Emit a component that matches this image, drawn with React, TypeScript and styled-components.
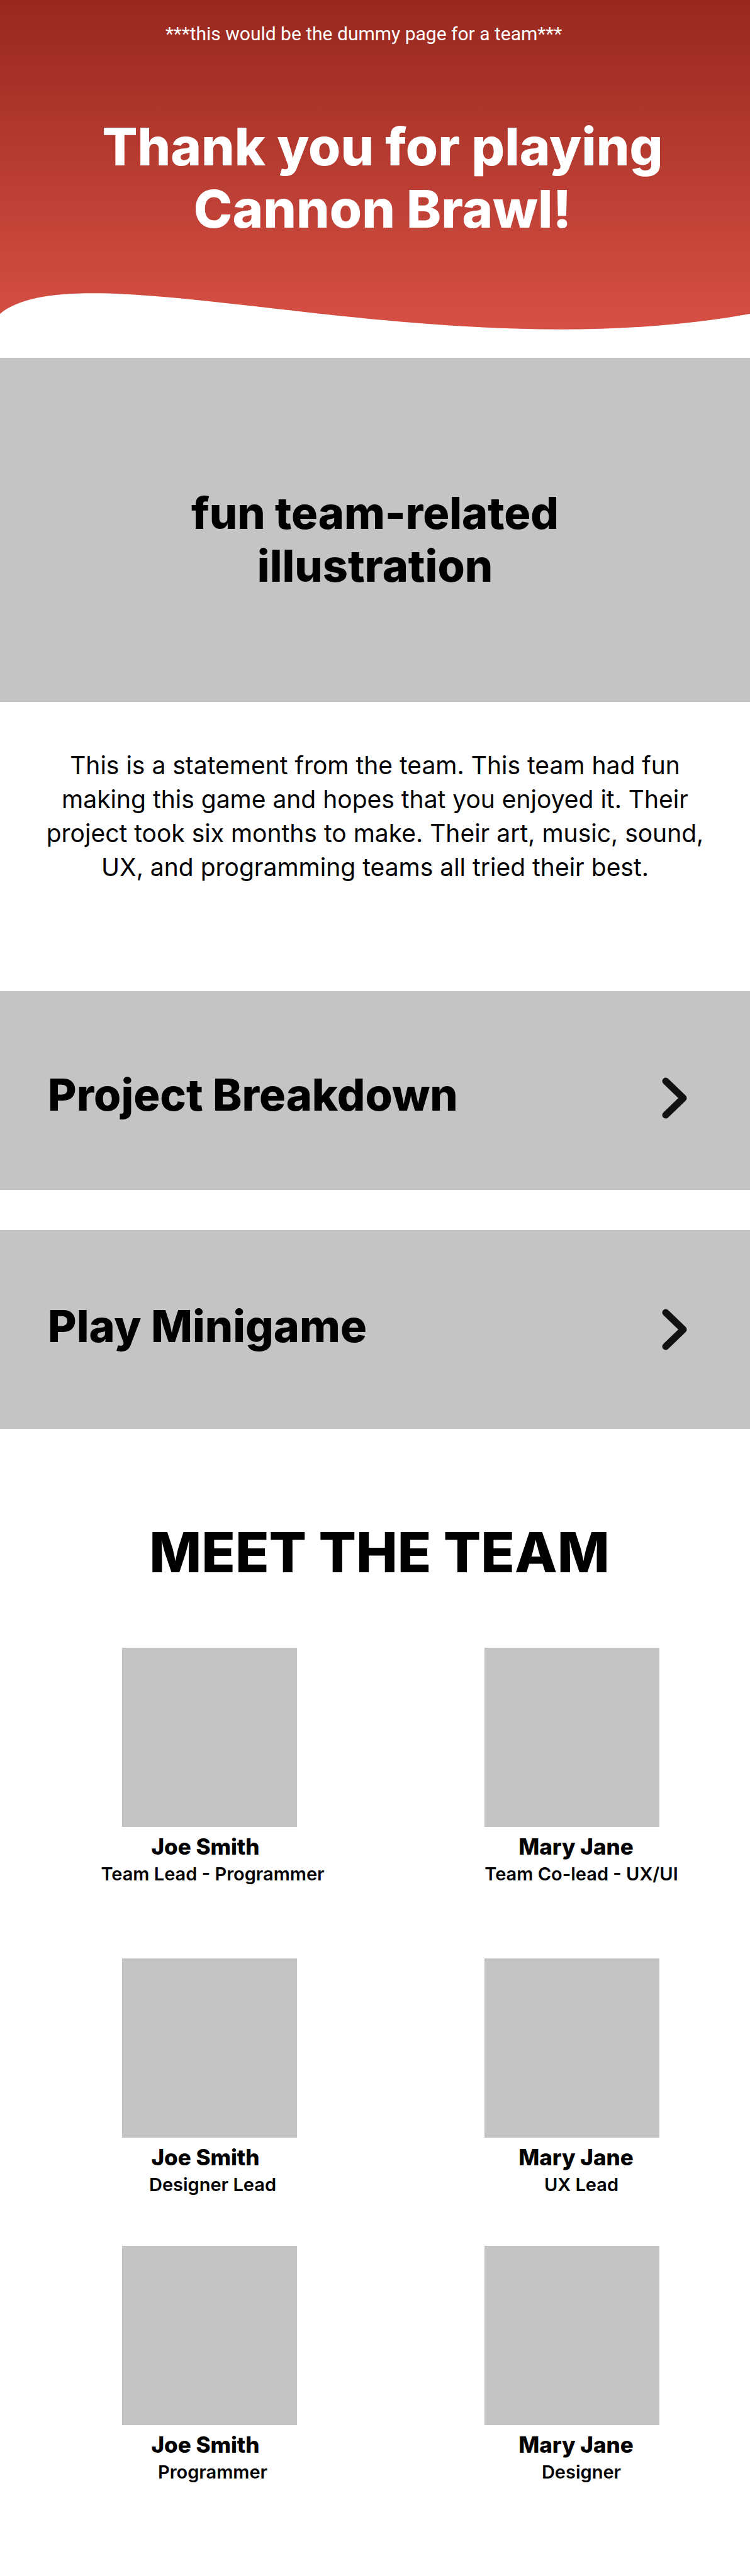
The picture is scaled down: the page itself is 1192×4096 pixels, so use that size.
import React from 'react';
import styled, { createGlobalStyle } from 'styled-components';

const GlobalStyle = createGlobalStyle`
  *, *::before, *::after { box-sizing: border-box; }
  body { margin: 0; background: #fff; }
  h1, h2, h3, p { margin: 0; }
`;

const Page = styled.div`
  color: #000;
  font-family: Inter, "Liberation Sans", sans-serif;
`;

const Hero = styled.header`
  display: flex;
  flex-direction: column;
  color: #fff;
  text-align: center;
  background: linear-gradient(#98281f 0, #d85045 532px);
`;

const Notice = styled.p`
  padding: 36px 36px 0 0;
  font-family: Roboto, "Liberation Sans", sans-serif;
  font-size: 30px;
  line-height: 36px;
  font-weight: 400;
`;

const HeroTitle = styled.h1`
  max-width: 986px;
  margin: 112px auto 78px;
  padding-left: 24px;
  font-size: 83px;
  line-height: 99px;
  font-weight: 800;
`;

const Wave = styled.svg`
  display: block;
  width: 100%;
  height: 109px;
  fill: #fff;
`;

const Illustration = styled.section`
  display: grid;
  place-items: center;
  height: 547px;
  padding-top: 31px;
  background: #c4c4c4;
`;

const IllustrationLabel = styled.h2`
  max-width: 640px;
  font-size: 70px;
  line-height: 84px;
  font-weight: 800;
  text-align: center;
`;

const Statement = styled.p`
  max-width: 1080px;
  margin: 0 auto;
  padding: 74px 0 170px;
  font-size: 39px;
  line-height: 54px;
  text-align: center;
`;

const Links = styled.nav`
  display: flex;
  flex-direction: column;
  gap: 64px;
`;

const LinkRow = styled.a<{ $drop: number }>`
  display: flex;
  align-items: center;
  justify-content: space-between;
  height: 316px;
  padding: ${({ $drop }) => $drop}px 100px 0 76px;
  color: inherit;
  text-decoration: none;
  background: #c4c4c4;
`;

const LinkLabel = styled.span`
  padding-bottom: 10px;
  font-size: 70px;
  line-height: 84px;
  font-weight: 800;
`;

const Chevron = styled.svg`
  width: 40px;
  height: 66px;
  fill: none;
  stroke: #111;
  stroke-width: 11;
  stroke-linecap: round;
  stroke-linejoin: round;
`;

const Team = styled.section`
  padding: 142px 0 148px;
`;

const TeamTitle = styled.h2`
  padding-left: 14px;
  font-size: 88px;
  line-height: 108px;
  font-weight: 800;
  text-align: center;
`;

const Members = styled.div`
  display: flex;
  flex-direction: column;
  padding: 98px 73px 0 123px;
`;

const MemberRow = styled.div<{ $gapAfter: number }>`
  display: flex;
  justify-content: space-between;
  margin-bottom: ${({ $gapAfter }) => $gapAfter}px;
`;

const Member = styled.article`
  width: 420px;
  text-align: center;
`;

const Photo = styled.div`
  width: 278px;
  height: 285px;
  margin: 0 auto 10px;
  background: #c4c4c4;
`;

const Name = styled.h3`
  padding-right: 13px;
  font-size: 35px;
  line-height: 42px;
  font-weight: 800;

  ${Member}:last-child & {
    padding: 0 0 0 13px;
  }
`;

const Role = styled.p`
  margin-top: 5px;
  padding-left: 10px;
  font-size: 29px;
  line-height: 36px;
  font-weight: 600;

  ${Member}:last-child & {
    padding-left: 30px;
  }
`;

const links = [
  { label: 'Project Breakdown', drop: 24 },
  { label: 'Play Minigame', drop: 0 },
];

const rows = [
  {
    gapAfter: 116,
    people: [
      { name: 'Joe Smith', role: 'Team Lead - Programmer' },
      { name: 'Mary Jane', role: 'Team Co-lead - UX/UI' },
    ],
  },
  {
    gapAfter: 79,
    people: [
      { name: 'Joe Smith', role: 'Designer Lead' },
      { name: 'Mary Jane', role: 'UX Lead' },
    ],
  },
  {
    gapAfter: 0,
    people: [
      { name: 'Joe Smith', role: 'Programmer' },
      { name: 'Mary Jane', role: 'Designer' },
    ],
  },
];

export default function App() {
  return (
    <Page>
      <GlobalStyle />
      <Hero>
        <Notice>***this would be the dummy page for a team***</Notice>
        <HeroTitle>Thank you for playing Cannon Brawl!</HeroTitle>
        <Wave viewBox="0 0 1192 109" preserveAspectRatio="none" aria-hidden="true">
          <path d="M0 39C130 -68 691 130 1192 39V109H0Z" />
        </Wave>
      </Hero>
      <Illustration>
        <IllustrationLabel>fun team-related illustration</IllustrationLabel>
      </Illustration>
      <Statement>
        This is a statement from the team. This team had fun making this game and hopes that you
        enjoyed it. Their project took six months to make. Their art, music, sound, UX, and
        programming teams all tried their best.
      </Statement>
      <Links>
        {links.map(({ label, drop }) => (
          <LinkRow key={label} href="#" $drop={drop}>
            <LinkLabel>{label}</LinkLabel>
            <Chevron viewBox="0 0 40 66" aria-hidden="true">
              <path d="M6 6L34 33L6 60" />
            </Chevron>
          </LinkRow>
        ))}
      </Links>
      <Team>
        <TeamTitle>MEET THE TEAM</TeamTitle>
        <Members>
          {rows.map(({ gapAfter, people }, i) => (
            <MemberRow key={i} $gapAfter={gapAfter}>
              {people.map(({ name, role }) => (
                <Member key={name}>
                  <Photo />
                  <Name>{name}</Name>
                  <Role>{role}</Role>
                </Member>
              ))}
            </MemberRow>
          ))}
        </Members>
      </Team>
    </Page>
  );
}
